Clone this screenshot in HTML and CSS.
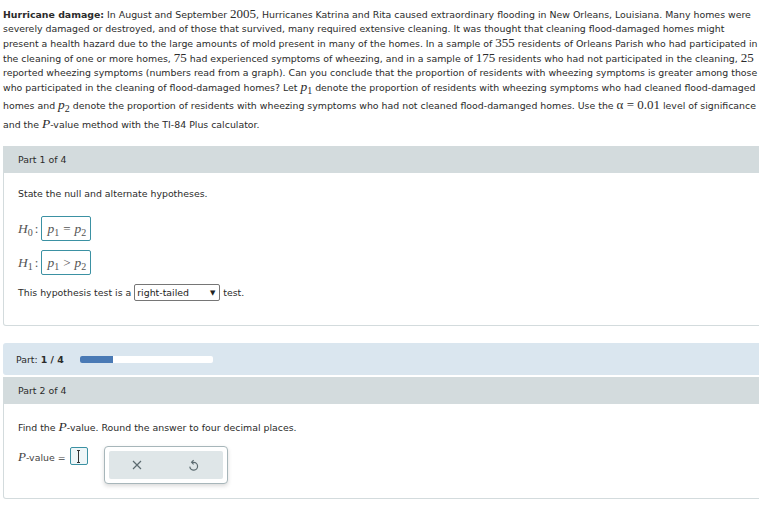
FILE: index.html
```html
<!DOCTYPE html>
<html lang="en">
<head>
  <meta charset="UTF-8">
  <title>Hypothesis Test</title>
  <link rel="stylesheet" href="styles.css">
</head>
<body>
  <div class="page">
    <p class="problem">
      <strong>Hurricane damage:</strong> In August and September <span class="num">2005</span>, Hurricanes Katrina and Rita caused extraordinary flooding in New Orleans, Louisiana. Many homes were severely damaged or destroyed, and of those that survived, many required extensive cleaning. It was thought that cleaning flood-damaged homes might present a health hazard due to the large amounts of mold present in many of the homes. In a sample of <span class="num">355</span> residents of Orleans Parish who had participated in the cleaning of one or more homes, <span class="num">75</span> had experienced symptoms of wheezing, and in a sample of <span class="num">175</span> residents who had not participated in the cleaning, <span class="num">25</span> reported wheezing symptoms (numbers read from a graph). Can you conclude that the proportion of residents with wheezing symptoms is greater among those who participated in the cleaning of flood-damaged homes? Let <span class="var low">p<sub>1</sub></span> denote the proportion of residents with wheezing symptoms who had cleaned flood-damaged homes and <span class="var low">p<sub>2</sub></span> denote the proportion of residents with wheezing symptoms who had not cleaned flood-damanged homes. Use the <span class="num">α = 0.01</span> level of significance and the <span class="var high">P</span>-value method with the TI-84 Plus calculator.
    </p>

    <div class="part">
      <div class="part-head">Part 1 of 4</div>
      <div class="part-body">
        <p class="prompt">State the null and alternate hypotheses.</p>
        <div class="hyp">
          <span class="var">H<sub>0</sub></span><span class="colon">:</span>
          <span class="hyp-box"><span class="var">p<sub>1</sub></span> = <span class="var">p<sub>2</sub></span></span>
        </div>
        <div class="hyp">
          <span class="var">H<sub>1</sub></span><span class="colon">:</span>
          <span class="hyp-box"><span class="var">p<sub>1</sub></span> &gt; <span class="var">p<sub>2</sub></span></span>
        </div>
        <div class="tail-row">
          This hypothesis test is a
          <span class="select">right-tailed <span class="caret">▼</span></span>
          test.
        </div>
      </div>
    </div>

    <div class="progress">
      <span>Part: <b>1 / 4</b></span>
      <div class="bar"><div class="bar-fill" style="width: 25%"></div></div>
    </div>

    <div class="part part-two">
      <div class="part-head">Part 2 of 4</div>
      <div class="part-body">
        <p class="prompt">Find the <span class="var">P</span>-value. Round the answer to four decimal places.</p>
        <div class="answer-row">
          <span class="label"><span class="var">P</span>-value =</span>
          <span class="answer-box"><span class="cursor"></span></span>
          <div class="tools">
            <div class="tools-inner">
              <svg width="10" height="10" viewBox="0 0 10 10"><path d="M1 1 L9 9 M9 1 L1 9" stroke="#5c6b70" stroke-width="1.2" fill="none"/></svg>
              <svg width="11" height="12" viewBox="0 0 11 12"><path d="M4 3.3 H5.6 A3.9 3.9 0 1 1 1.8 7.6" stroke="#5c6b70" stroke-width="1.2" fill="none"/><path d="M5.6 1.2 L3.6 3.3 L5.6 5.4" stroke="#5c6b70" stroke-width="1.2" fill="none"/></svg>
            </div>
          </div>
        </div>
      </div>
    </div>
  </div>
</body>
</html>
```

FILE: styles.css
```css
* {
  box-sizing: border-box;
  margin: 0;
  padding: 0;
}

body {
  font-family: 'DejaVu Sans', Verdana, sans-serif;
  font-size: 9.4px;
  color: #2b2b2b;
  background: #fff;
  overflow: hidden;
}

.page {
  width: 762px;
  padding: 7px 0 0 3px;
}

.problem {
  line-height: 14px;
}

.problem strong {
  font-weight: bold;
}

.num {
  font-family: 'Liberation Serif', 'Times New Roman', serif;
  font-size: 13px;
  line-height: 14px;
}

.var {
  font-family: 'Liberation Serif', 'Times New Roman', serif;
  font-style: italic;
  font-size: 13.5px;
  line-height: 14px;
}

.var sub {
  font-style: normal;
  font-size: 10px;
  vertical-align: -3px;
  line-height: 0;
}

/* math with a subscript takes more room in the text */
.problem .low {
  display: inline-block;
  padding-bottom: 4px;
}

.problem .high {
  display: inline-block;
  padding-top: 1px;
}

.part {
  border: 1px solid #d3dbdd;
  border-top: none;
  margin-top: 14px;
  width: 780px;
  border-radius: 0 0 3px 3px;
}

.part-head {
  background: #d3dbdd;
  height: 27px;
  line-height: 27px;
  padding-left: 14px;
}

.part-body {
  padding: 14px 14px 0;
  height: 152px;
}

.prompt {
  line-height: 13px;
  margin-bottom: 16px;
}

.hyp {
  display: flex;
  align-items: center;
  height: 25px;
  margin-bottom: 9px;
  color: #555;
}

.hyp .var {
  color: #555;
}

.colon {
  font-family: 'Liberation Serif', serif;
  font-size: 13px;
  margin: 0 3px 0 2px;
}

.hyp-box {
  display: inline-flex;
  align-items: center;
  height: 25px;
  padding: 0 4px 0 5px;
  border: 1px solid #3b91a3;
  border-radius: 2px;
  font-family: 'Liberation Serif', serif;
  font-size: 13px;
  color: #555;
  gap: 4px;
}

.tail-row {
  display: flex;
  align-items: center;
  gap: 3px;
  margin-top: 0;
}

.select {
  display: inline-flex;
  justify-content: space-between;
  align-items: center;
  width: 86px;
  height: 17px;
  border: 1px solid #767676;
  border-radius: 2px;
  padding: 0 4px 0 2px;
  color: #222;
}

.caret {
  font-size: 7px;
}

.progress {
  display: flex;
  align-items: center;
  margin-top: 17px;
  width: 780px;
  height: 32px;
  background: #dae6ef;
  border-radius: 3px;
  padding-left: 13px;
}

.progress b {
  font-weight: bold;
}

.bar {
  width: 133px;
  height: 7px;
  background: #fff;
  border-radius: 2px;
  margin-left: 16px;
}

.bar-fill {
  height: 100%;
  background: #4a7ab5;
  border-radius: 2px 0 0 2px;
}

.part-two {
  margin-top: 2px;
}

.part-two .part-body {
  height: 94px;
  padding-top: 16px;
}

.part-two .prompt {
  margin-bottom: 12px;
}

.answer-row {
  display: flex;
  align-items: flex-start;
}

.label {
  margin-top: 4px;
  color: #444;
}

.answer-row .var {
  font-size: 13px;
}

.answer-box {
  display: flex;
  justify-content: center;
  align-items: center;
  width: 18px;
  height: 18px;
  margin: 1px 0 0 4px;
  border: 1px solid #3b91a3;
  border-radius: 2px;
  background: #eef6f8;
}

.cursor {
  width: 3px;
  height: 13px;
  border: 1px solid #333;
  border-left: none;
  border-right: none;
  background: linear-gradient(#333, #333) center / 1px 100% no-repeat;
}

.tools {
  margin-left: 16px;
  width: 124px;
  height: 38px;
  border: 1px solid #a7b6ba;
  border-radius: 4px;
  padding: 4px;
  box-shadow: 0 2px 4px rgba(0, 0, 0, 0.15);
  background: #fff;
}

.tools-inner {
  display: flex;
  justify-content: space-around;
  align-items: center;
  height: 100%;
  background: #dfe6e8;
  border-radius: 2px;
}
```
